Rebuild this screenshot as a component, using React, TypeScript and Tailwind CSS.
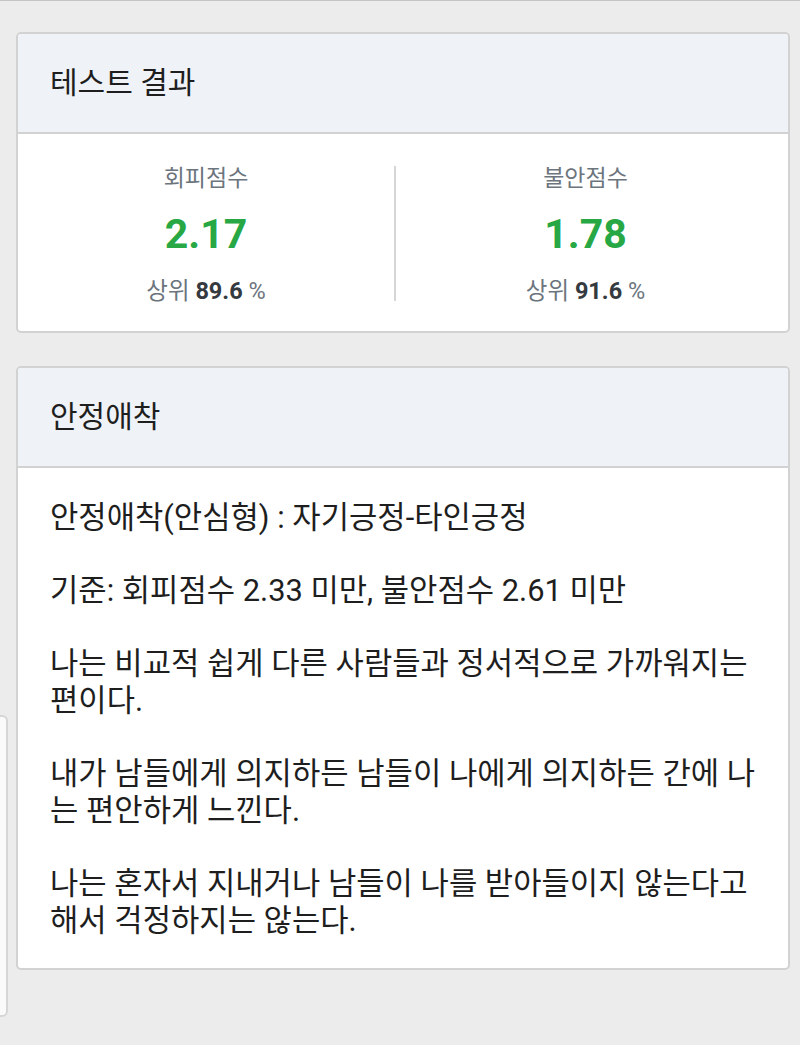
const font = { fontFamily: '"Roboto", "Noto Sans CJK KR", sans-serif' };

function Score({ label, value, rank }: { label: string; value: string; rank: string }) {
  return (
    <div className="flex flex-col items-center">
      <p className="text-[23px] leading-[30px] text-[#6c757d]">{label}</p>
      <p className="mt-[15px] text-[41px] leading-[50px] font-bold text-[#28a745]">{value}</p>
      <p className="mt-[17px] text-[23.5px] leading-[30px] text-[#6c757d]">
        상위 <span className="font-bold text-[#343a40]">{rank}</span> %
      </p>
    </div>
  );
}

function Card({ title, children }: { title: string; children: React.ReactNode }) {
  return (
    <div className="overflow-hidden rounded-[5px] border-2 border-[#d2d2d2] bg-white">
      <div className="border-b-2 border-[#d2d2d2] bg-[#eff2f6] px-[32px] py-[31px] text-[30px] leading-[36px] text-[#1e1e1e]">
        {title}
      </div>
      {children}
    </div>
  );
}

export default function App() {
  const paragraphs = [
    ["안정애착(안심형) : 자기긍정-타인긍정"],
    ["기준: 회피점수 2.33 미만, 불안점수 2.61 미만"],
    ["나는 비교적 쉽게 다른 사람들과 정서적으로 가까워지는", "편이다."],
    ["내가 남들에게 의지하든 남들이 나에게 의지하든 간에 나", "는 편안하게 느낀다."],
    ["나는 혼자서 지내거나 남들이 나를 받아들이지 않는다고", "해서 걱정하지는 않는다."],
  ];

  return (
    <div style={font} className="relative min-h-[1045px] border-t border-[#c4c4c4] bg-[#ececec] pl-[16px] pr-[10px] pt-[31px]">
      <Card title="테스트 결과">
        <div className="flex items-start pt-[30px] pb-[25px]">
          <div className="w-[376px]">
            <Score label="회피점수" value="2.17" rank="89.6" />
          </div>
          <div className="mt-[2px] h-[135px] w-[2px] bg-[#d6d6d6]" />
          <div className="flex-1 pr-[13px]">
            <Score label="불안점수" value="1.78" rank="91.6" />
          </div>
        </div>
      </Card>

      <div className="mt-[33px]">
        <Card title="안정애착">
          <div className="flex flex-col gap-[36px] px-[32px] pt-[31px] pb-[29px] text-[30.8px] leading-[37px] text-[#1e1e1e]">
            {paragraphs.map((lines, i) => (
              <p key={i}>
                {lines.map((l, j) => (
                  <span key={j} className="block whitespace-nowrap">
                    {l}
                  </span>
                ))}
              </p>
            ))}
          </div>
        </Card>
      </div>

      <div className="absolute left-[-10px] top-[714px] h-[302px] w-[18px] rounded-[6px] border-2 border-[#d6d6d6] bg-[#fafafa]" />
    </div>
  );
}
